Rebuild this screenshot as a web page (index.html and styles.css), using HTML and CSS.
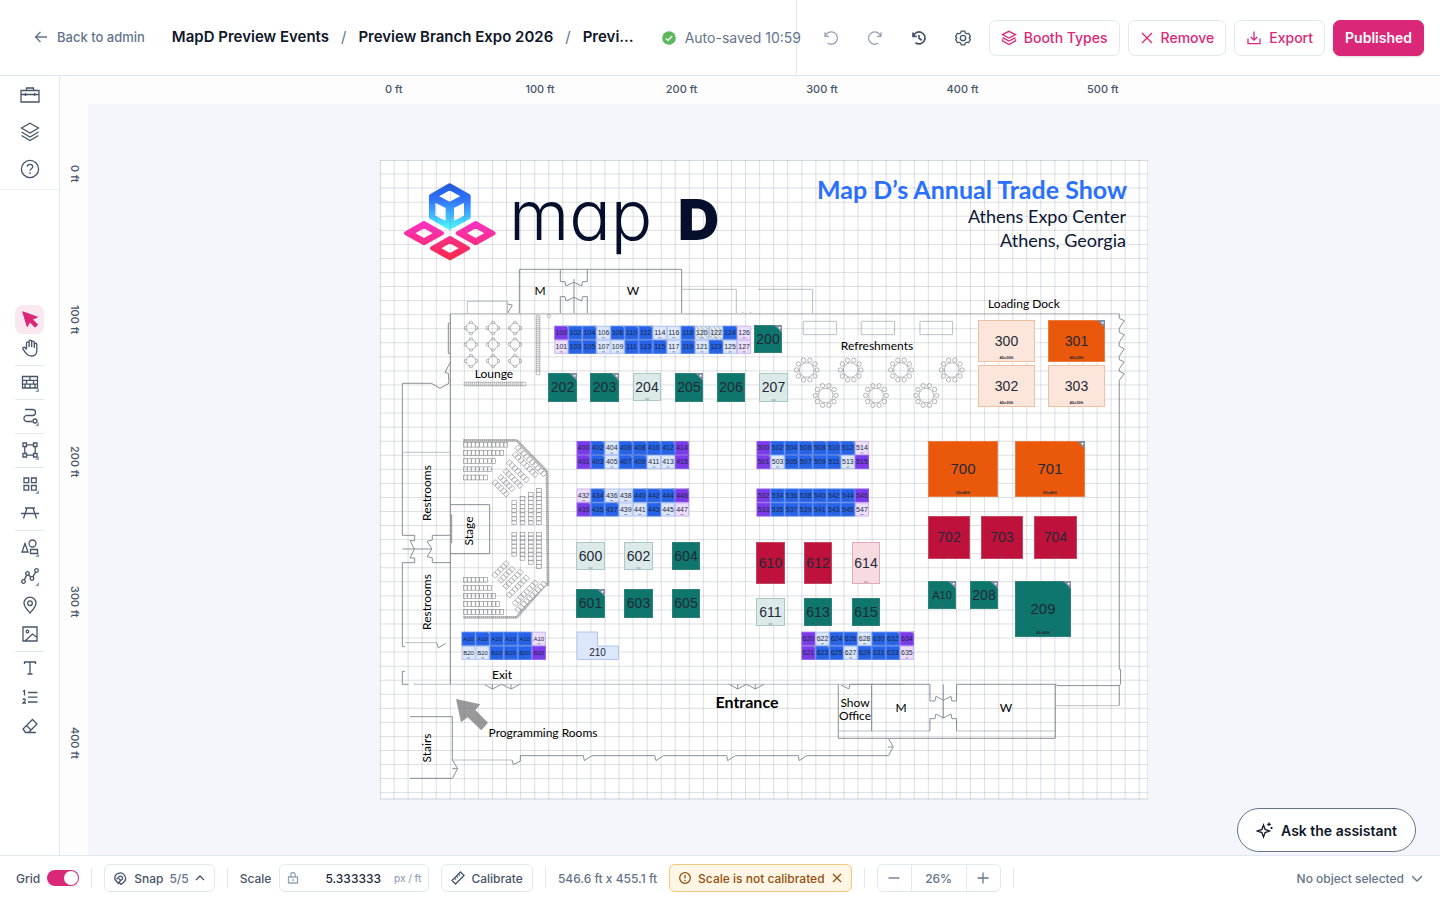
FILE: index.html
```html
<!DOCTYPE html>
<html lang="en">
<head>
<meta charset="utf-8">
<title>Preview Branch Expo 2026</title>
<link rel="stylesheet" href="styles.css">
</head>
<body>
<div class="app">
  <header class="topbar">
    <div class="topbar-left">
      <a class="back" href="#"><svg class="ic16" viewBox="0 0 16 16"><path d="M14 8H2.500M7.500 3L2.500 8l5 5"/></svg>Back to admin</a>
      <nav class="crumbs" aria-label="Breadcrumb">
        <a href="#">MapD Preview Events</a><span class="slash">/</span><a href="#">Preview Branch Expo 2026</a><span class="slash">/</span><a href="#">Previ...</a>
      </nav>
      <div class="saved"><svg class="ic14" viewBox="0 0 14 14"><circle class="ok" cx="7" cy="7" r="6.800"/><path class="tick" d="M3.800 7.400l2.200 1.900 4.200-4.300"/></svg>Auto-saved 10:59</div>
    </div>
    <div class="topbar-right">
      <button class="icon-btn dim" aria-label="Undo"><svg class="ic16" viewBox="0 0 16 16"><path d="M2 2.300v4h4M2.300 6.200A6.200 6.200 0 1 1 4.500 13"/></svg></button>
      <button class="icon-btn dim" aria-label="Redo"><svg class="ic16" viewBox="0 0 16 16"><path d="M14 2.300v4h-4M13.700 6.200A6.200 6.200 0 1 0 11.500 13"/></svg></button>
      <button class="icon-btn" aria-label="History"><svg class="ic16 bold" viewBox="0 0 16 16"><path d="M2 2.500v3.800h3.800M2.300 6.200A6 6 0 1 1 4.500 12.800M8 5v3.300l2.800 2"/></svg></button>
      <button class="icon-btn" aria-label="Settings"><svg class="ic16" viewBox="0 0 16 16"><path d="M5.500 3L6.300 1.200h3.400L10.500 3l1.200.7 2-.2 1.700 2.900L14.200 8l1.200 1.600-1.700 2.900-2-.2-1.200.7-.8 1.800H6.300L5.500 13l-1.200-.7-2 .2L.6 9.600 1.800 8 .6 6.400l1.700-2.900 2 .2z"/><circle cx="8" cy="8" r="2.700"/></svg></button>
      <button class="btn"><svg class="ic16" viewBox="0 0 16 16"><path d="M8 1.300l6.500 3.300L8 8 1.500 4.600zM1.500 7.600L8 11l6.500-3.400M1.500 9.300v1.500L8 14.500l6.500-3.700V9.300"/></svg>Booth Types</button>
      <button class="btn"><svg class="ic14" viewBox="0 0 14 14"><path d="M2 2l10 10M12 2L2 12"/></svg>Remove</button>
      <button class="btn"><svg class="ic16" viewBox="0 0 16 16"><path d="M8 1.500v8.500M4.800 7L8 10.200 11.200 7M2 8.500v5.200h12V8.500"/></svg>Export</button>
      <button class="btn primary">Published</button>
    </div>
  </header>

  <aside class="sidebar">
    <div class="side-top">
      <button class="side-btn" aria-label="Toolbox"><svg class="ic20" viewBox="0 0 20 20"><path d="M1 5.500h18v11.500H1zM6.500 5.500V3h7v2.500M1 9.500h18M5.500 8v3M14.500 8v3"/></svg></button>
      <button class="side-btn" aria-label="Layers"><svg class="ic20" viewBox="0 0 20 20"><path d="M10 1.200l8.500 4.800L10 11 1.500 6zM1.500 10l8.500 5 8.500-5M1.500 13.500l8.500 5 8.500-5"/></svg></button>
      <button class="side-btn" aria-label="Help"><svg class="ic20" viewBox="0 0 20 20"><circle cx="10" cy="10" r="8.600"/><path d="M7.300 7.800C7.300 4.600 12.700 4.600 12.700 7.800 12.700 9.800 10 9.700 10 11.800M10 13.300v1.600"/></svg></button>
    </div>
    <div class="tools">
      <button class="tool active" aria-label="Select"><svg class="ic18" viewBox="0 0 18 18"><path class="solid" d="M2 2l14 5.200-5.300 2.100 5.600 5.300-2.200 2.200-5.500-5.500-2.300 4.900z"/></svg></button>
      <button class="tool" aria-label="Pan"><svg class="ic18" viewBox="0 0 18 18"><path d="M5.500 10V4.200a1.300 1.300 0 0 1 2.600 0V8 2.500a1.300 1.300 0 0 1 2.600 0V8 3.500a1.300 1.300 0 0 1 2.600 0V9 5.500a1.200 1.200 0 0 1 2.500 0V11.500C15.800 15 13.500 17 10.500 17S6.200 16 4.800 14L2 10.200C1.200 8.500 3.200 7.500 4.200 8.800L5.500 10.500"/></svg></button>
      <hr>
      <button class="tool more" aria-label="Wall"><svg class="ic18" viewBox="0 0 18 18"><path d="M1.500 3.500h15v11.500h-15zM1.500 7.300h15M1.500 11.200h15M9 3.500v3.800M5.500 7.300v3.900M12.500 7.300v3.900M9 11.200V15M4 11.200V15M14 11.200V15"/></svg></button>
      <hr>
      <button class="tool more" aria-label="Path"><svg class="ic18" viewBox="0 0 18 18"><path d="M4 2.500h7.500a3 3 0 0 1 0 6H5a3.200 3.200 0 0 0 0 6h6.500"/><circle cx="14" cy="14" r="2"/></svg></button>
      <hr>
      <button class="tool more" aria-label="Edit nodes"><svg class="ic18" viewBox="0 0 18 18"><path d="M2 2h3.500v3.500H2zM12.500 2H16v3.500h-3.500zM2 12.500h3.500V16H2zM12.500 12.500H16V16h-3.500zM5.500 3.800h7M5.500 14.200h7M3.800 5.500v7M14.200 5.500v7"/></svg></button>
      <hr>
      <button class="tool more" aria-label="Booths"><svg class="ic18" viewBox="0 0 18 18"><path d="M3 3h4.700v4.700H3zM10.500 3h4.700v4.700h-4.700zM3 10.500h4.700v4.700H3zM10.500 10.500h4.700v4.700h-4.700z"/></svg></button>
      <button class="tool" aria-label="Table"><svg class="ic18" viewBox="0 0 18 18"><path d="M4 4h10M0 9.500h18M6 4L2.500 14.500M12 4l3.500 10.500"/></svg></button>
      <hr>
      <button class="tool more" aria-label="Shapes"><svg class="ic18" viewBox="0 0 18 18"><path d="M4 5.500l3 8.500H1zM9.500 11.500h7v4h-7z"/><circle cx="11.500" cy="5.500" r="3.500"/></svg></button>
      <button class="tool more" aria-label="Polyline"><svg class="ic18" viewBox="0 0 18 18"><circle cx="2.500" cy="14.500" r="1.800"/><circle cx="6.500" cy="6.500" r="1.800"/><circle cx="11" cy="11.500" r="1.800"/><circle cx="15.500" cy="3.500" r="1.800"/><path d="M3.300 12.900l2.400-4.800M7.700 7.800l2.100 2.400M11.700 9.900l3-4.700"/></svg></button>
      <button class="tool" aria-label="Pin"><svg class="ic18" viewBox="0 0 18 18"><path d="M9 17C5.500 13 3 10.500 3 7.200a6 6 0 0 1 12 0C15 10.500 12.500 13 9 17z"/><circle cx="9" cy="7.200" r="2.300"/></svg></button>
      <button class="tool" aria-label="Image"><svg class="ic18" viewBox="0 0 18 18"><path d="M2 2h14v14H2zM4.500 15.500l7-6.500 4.500 3.500"/><circle cx="6.500" cy="6.500" r="1.300"/></svg></button>
      <hr>
      <button class="tool" aria-label="Text"><svg class="ic18" viewBox="0 0 18 18"><path d="M3.500 5V3h11v2M9 3v12M6.500 15h5"/></svg></button>
      <button class="tool" aria-label="Numbering"><svg class="ic18" viewBox="0 0 18 18"><path d="M7 4.500h9.500M7 9.200h9.500M7 14h9.500M2 3.500L3.500 2.500v5M2 11.800C2.500 10 5 10.800 4 12.700L2 15h3"/></svg></button>
      <button class="tool" aria-label="Eraser"><svg class="ic18" viewBox="0 0 18 18"><path d="M11.500 2.500l4.500 4.500-8.500 8.500H4.500L2 12zM5.500 8.500l4.500 4.500M7.500 15.500H15"/></svg></button>
    </div>
  </aside>

  <div class="ruler-x"><div class="track-x"><span>0 ft</span><span>100 ft</span><span>200 ft</span><span>300 ft</span><span>400 ft</span><span>500 ft</span></div></div>
  <div class="ruler-y"><div class="track-y"><span>0 ft</span><span>100 ft</span><span>200 ft</span><span>300 ft</span><span>400 ft</span></div></div>

  <main class="canvas">
    <svg class="plan" viewBox="380 160 768 640" role="img" aria-label="Floor plan">
      <defs>
        <linearGradient id="cube" x1="0" y1="0" x2="0" y2="1"><stop offset="0" stop-color="#1d5be0"/><stop offset=".35" stop-color="#2f74ff"/><stop offset="1" stop-color="#4df3ff"/></linearGradient>
        <linearGradient id="pink" x1="0" y1="0" x2="0" y2="1"><stop offset="0" stop-color="#ff2fc4"/><stop offset="1" stop-color="#ff2c86"/></linearGradient>
        <linearGradient id="red" x1="0" y1="0" x2="0" y2="1"><stop offset="0" stop-color="#ff2c86"/><stop offset="1" stop-color="#ff2a4c"/></linearGradient>
        <pattern id="hatch" width="3" height="3" patternUnits="userSpaceOnUse" patternTransform="rotate(-45)"><rect class="hatch-bg" width="3" height="3"/><rect class="hatch-fg" width="1" height="3"/></pattern>
      </defs>
      <rect class="paper" x="380" y="160" width="768" height="639"/>
      <g transform="translate(380 155) scale(.3333)">
        <g fill-rule="evenodd" stroke-linejoin="round" stroke-width="12">
          <path fill="url(#cube)" stroke="url(#cube)" d="M209 91L266 123V187L209 218L153 187V123zM209 99L165 124L209 147L253 124zM160 134V186L203 207V155zM258 134V186L216 207V155z"/>
          <path fill="url(#pink)" stroke="url(#pink)" d="M132 204L186 235L132 265L78 235zM132 213L94 235L132 256L170 235z"/>
          <path fill="url(#pink)" stroke="url(#pink)" d="M287 204L341 235L287 265L233 235zM287 213L249 235L287 256L325 235z"/>
          <path fill="url(#red)" stroke="url(#red)" d="M210 249L264 280L210 310L156 280zM210 258L172 280L210 301L248 280z"/>
        </g>
        <g class="wall">
          <path d="M418 475V343H905V475M541 345V380H555L558 393L582 382L605 393L608 380H622V345M582 372V475M541 475V425H555L558 438L582 427L605 438L608 425H622V475"/>
          <path class="faint" d="M905 403H1069V475M1134 403H1298V475M262 475V439H382V475M211 476H2218M502 484a5 5 0 1 0 10 0a5 5 0 1 0-10 0M1088 475V470M1112 475V470"/>
          <path d="M383 447L397 450L383 474M211 505H205V595H211M211 622L195 652L205 655L207 685L180 700L154 685H67V735M211 476V1588"/>
          <path class="faint" d="M1270 499h100v40h-100zM1444 499h100v40h-100zM1620 499h98v40h-98z"/>
          <path d="M2218 476V490L2233 497L2218 520V532L2233 539L2218 562V574L2233 581L2218 604V614L2233 621L2218 641V649L2233 656L2218 676V1543H2222V1587L2218 1592V1652M2218 1592H2030"/>
        </g>
      </g>
      <g class="wall" transform="translate(380 400) scale(.3333)">
        <path d="M67 0V406H104V422H90L103 447L90 474H104V488H67V740H75M67 447H156M211 406H157V420L141 424L156 447L141 470L157 474V488H211M211 314H329V461H211M215 343V430M170 728L175 744L197 730"/>
        <path class="faint" d="M67 157H211M75 728H170"/>
        <path class="thick" d="M250 121H410M410 121L500 213M501 213L504 558M500 550L410 652M410 652H250"/>
      </g>
      <g class="wall" transform="translate(380 620) scale(.3333)">
        <path class="faint" d="M103 188V193H1575M217 420H396M1375 333H1650M1730 333H2026M2026 257H2218"/>
        <path d="M75 154H67V193H85M313 193L337 207L365 193L393 207L420 193M337 193V207M393 193V207M1048 193L1073 207L1100 193L1126 207L1152 193M1073 193V207M1126 193V207"/>
        <path d="M90 290H217V420L233 446L217 475H90M217 446H233M396 420L400 434L421 423V407H610L613 422L636 407H824L828 422L851 407H1040L1043 422L1066 407H1255L1258 422L1280 407H1526L1540 380L1526 357M1524 381H1538"/>
        <path d="M1375 193V355H2026V193M1383 195L1407 207L1410 193H1650V243H1665L1668 229L1690 241L1713 229L1716 243H1730V193H2030M1690 193V295M1650 333V296H1665L1668 282L1690 294L1713 282L1716 296H1730V333M1475 193V333"/>
        <path class="arrow" d="M228 237L301 253L286 270L324 308L304 331L263 292L243 307z"/>
      </g>
      <g id="furniture" class="furniture"></g>
      <g id="grid" class="grid"></g>
      <g id="booths"></g>
      <text class="logo-map" x="509" y="240">map</text>
      <text class="logo-d" x="678" y="240">D</text>
      <text class="plan-title" x="1127" y="199">Map D’s Annual Trade Show</text>
      <text class="plan-sub" x="1126" y="223">Athens Expo Center</text>
      <text class="plan-sub" x="1126" y="247">Athens, Georgia</text>
      <g class="place">
        <text x="540" y="295">M</text><text x="633" y="295">W</text><text x="494" y="378">Lounge</text>
        <text x="1024" y="308">Loading Dock</text><text x="877" y="350">Refreshments</text>
        <text x="502" y="679">Exit</text><text x="543" y="737">Programming Rooms</text>
        <text x="855" y="707">Show</text><text x="855" y="720">Office</text><text x="901" y="712">M</text><text x="1006" y="712">W</text>
        <text class="entrance" x="747" y="708">Entrance</text>
        <text transform="translate(431 493) rotate(-90)">Restrooms</text><text transform="translate(431 602) rotate(-90)">Restrooms</text>
        <text transform="translate(473 531) rotate(-90)">Stage</text><text transform="translate(431 748) rotate(-90)">Stairs</text>
      </g>
    </svg>
    <button class="assistant"><svg class="ic18" viewBox="0 0 18 18"><path d="M7.500 4l1.600 4.400L13.500 10l-4.400 1.600L7.500 16l-1.600-4.400L1.500 10l4.400-1.600zM13 1.500v3.600M11.200 3.300h3.600M15.500 6v2M14.500 7h2"/></svg>Ask the assistant</button>
  </main>

  <footer class="statusbar">
    <label class="grid-toggle">Grid<input type="checkbox" role="switch" checked></label>
    <i class="sep"></i>
    <button class="chip"><svg class="ic14" viewBox="0 0 14 14"><path d="M5 13L3.500 11.500 1 8.500a5.300 5.300 0 1 1 8.500 3L7 13.500 5 11l2.800-2.400A2 2 0 1 0 5 5.700L2.500 8.200M4.800 7.500l1.700 1.700M1 8.500l2.500 3"/></svg>Snap <span class="muted">5/5</span><svg class="ic10" viewBox="0 0 10 10"><path d="M1 7l4-4 4 4"/></svg></button>
    <i class="sep"></i>
    <label class="scale-label" for="scale">Scale</label>
    <div class="scale-box"><svg class="ic12 dim" viewBox="0 0 12 12"><path d="M1.500 5h9v6h-9zM3.800 5V2.800a2.200 2.200 0 0 1 4.400 0V5M5 8h2"/></svg><input id="scale" type="text" value="5.333333"><span>px / ft</span></div>
    <button class="chip"><svg class="ic14" viewBox="0 0 14 14"><path d="M9.500 1l3.500 3.500L4.500 13 1 9.500zM7.500 3l1.500 1.500M5.500 5l1.500 1.500M3.500 7L5 8.500"/></svg>Calibrate</button>
    <i class="sep"></i>
    <span class="dims">546.6 ft x 455.1 ft</span>
    <div class="warn"><svg class="ic12" viewBox="0 0 12 12"><circle cx="6" cy="6" r="5.300"/><path d="M6 3v3.600M6 8v1.200"/></svg>Scale is not calibrated<button aria-label="Dismiss"><svg class="ic10" viewBox="0 0 10 10"><path d="M1 1l8 8M9 1L1 9"/></svg></button></div>
    <i class="sep"></i>
    <div class="zoom"><button aria-label="Zoom out"><svg class="ic12" viewBox="0 0 12 12"><path d="M.5 6h11"/></svg></button><output>26%</output><button aria-label="Zoom in"><svg class="ic12" viewBox="0 0 12 12"><path d="M.5 6h11M6 .5v11"/></svg></button></div>
    <i class="sep"></i>
    <button class="selection">No object selected<svg class="ic10" viewBox="0 0 10 10"><path d="M0 3l5 5 5-5"/></svg></button>
  </footer>
</div>
<script src="plan.js"></script>
</body>
</html>
```

FILE: styles.css
```css
* { box-sizing: border-box; }
body { margin: 0; font-family: Inter, "Liberation Sans", sans-serif; color: #475569; font-size: 12px; }
button { font: inherit; color: inherit; background: none; border: 0; padding: 0; display: flex; align-items: center; justify-content: center; cursor: pointer; white-space: nowrap; }
a { color: inherit; text-decoration: none; }
svg { display: block; flex: none; fill: none; stroke: currentColor; stroke-width: 1.3; }
.ic10 { width: 10px; height: 10px; }
.ic12 { width: 12px; height: 12px; }
.ic14 { width: 14px; height: 14px; }
.ic16 { width: 16px; height: 16px; }
.ic18 { width: 18px; height: 18px; }
.ic20 { width: 20px; height: 20px; }
.bold { stroke-width: 1.7; }
.dim { color: #94a3b8; }

.app { display: grid; grid-template: auto 28px minmax(0, 1fr) auto / 60px 28px minmax(0, 1fr); height: 100vh; background: #fff; }
.topbar { grid-column: 1 / -1; display: flex; height: 76px; border-bottom: 1px solid #e2e8f0; white-space: nowrap; }
.topbar-left { flex: 1; min-width: 0; display: flex; align-items: center; padding-left: 33px; border-right: 1px solid #e2e8f0; }
.back { display: flex; align-items: center; gap: 8px; font-size: 13px; font-weight: 500; color: #64748b; margin-right: 27px; padding-bottom: 1px; }
.crumbs { display: flex; gap: 11px; font-size: 15px; font-weight: 600; color: #0f172a; margin-right: 28px; padding-bottom: 2px; }
.slash { font-weight: 400; color: #64748b; padding: 0 1px; }
.saved { display: flex; align-items: center; gap: 9px; font-size: 14px; color: #64748b; }
.ok { fill: #5cb85c; stroke: none; }
.tick { stroke: #fff; }
.topbar-right { display: flex; align-items: center; gap: 8px; padding: 0 16px; }
.icon-btn { width: 36px; height: 36px; }
.icon-btn.dim { color: #94a3b8; }
.btn { height: 36px; padding: 0 11px; gap: 7px; border: 1px solid #e2e8f0; border-radius: 7px; color: #db2777; font-size: 14px; font-weight: 500; }
.btn.primary { background: #db2777; border-color: #db2777; color: #fff; font-weight: 600; box-shadow: 0 1px 2px #0002; }

.sidebar { grid-row: 2 / 4; display: flex; flex-direction: column; border-right: 1px solid #e2e8f0; }
.side-top { display: flex; flex-direction: column; align-items: center; border-bottom: 1px solid #eef1f5; padding-bottom: 2px; }
.side-btn { width: 37px; height: 37px; }
.tools { flex: 1; display: flex; flex-direction: column; align-items: center; justify-content: center; }
.tool { width: 29px; height: 29px; border-radius: 8px; position: relative; }
.tool.active { background: #fbe7f0; color: #db2777; }
.solid { fill: currentColor; stroke-linejoin: round; }
.more::after { content: ""; position: absolute; right: 5px; bottom: 5px; border: 2px solid; border-color: transparent #94a3b8 #94a3b8 transparent; }
.tools hr { width: 29px; margin: 2px 0; border: 0; border-top: 1px solid #e2e8f0; }

.ruler-x { grid-column: 2 / 4; padding: 0 0 2px 28px; background: #fdfdfd; display: flex; justify-content: center; align-items: center; }
.ruler-y { display: flex; flex-direction: column; justify-content: center; align-items: center; padding-left: 2px; background: #fdfdfd; }
.track-x { display: grid; grid-template-columns: repeat(5, 100fr) 47fr; width: 768px; font-size: 11px; font-weight: 500; }
.track-x span { padding-left: 5px; white-space: nowrap; }
.track-y { display: grid; grid-template-rows: repeat(4, 100fr) 55fr; height: 640px; font-size: 11px; font-weight: 500; }
.track-y span { writing-mode: vertical-rl; padding-top: 5px; }

.canvas { position: relative; display: flex; align-items: center; justify-content: center; background: #f4f6fb; overflow: hidden; }
.plan { width: 768px; height: 640px; stroke: none; }
.paper { fill: #fff; stroke: #d5dbe5; }
.grid { stroke: #6b7684; stroke-opacity: .23; stroke-width: 1; }
.wall { stroke: #8b8f94; stroke-width: 3; }
.wall .faint { stroke: #bcc0c4; }
.wall .thick { stroke: #aaa; stroke-width: 8; stroke-dasharray: 5 1; }
.wall .arrow { fill: #999; stroke: none; }
.furniture { stroke: #888; stroke-width: .6; fill: #fff; }
.plan text { font-family: Lato, "Open Sans", sans-serif; }
.plan .logo-map { font: 300 69px Inter, sans-serif; font-feature-settings: "cv11"; fill: #050f2c; }
.plan .logo-d { font: 900 57px Inter, sans-serif; fill: #050f2c; }
.plan-title { font-size: 25px; font-weight: 700; fill: #2970ff; text-anchor: end; }
.plan-sub { font-size: 18px; fill: #0b1633; text-anchor: end; }
.place { font-size: 12px; fill: #000; text-anchor: middle; }
.entrance { font-size: 16px; font-weight: 700; }
.plan .num { font-family: "Liberation Sans", Arial, sans-serif; fill: #1f2937; text-anchor: middle; }
.plan .area { font-size: 4px; font-weight: 700; }
.booth { stroke-width: 1; }
.green { fill: #0f766e; stroke: #2d8279; }
.mint { fill: #dbe9e8; stroke: #a9c9c6; }
.blue { fill: #2563eb; stroke: #4a7bea; }
.sky { fill: #dce7fc; stroke: #b0c5f2; }
.purple { fill: #7c3aed; stroke: #8d58ec; }
.lilac { fill: #ecdffc; stroke: #d0b4f3; }
.orange { fill: #ea580c; stroke: #ea7c40; }
.peach { fill: #fce6db; stroke: #efbfa2; }
.crimson { fill: #be123c; stroke: #c54562; }
.rose { fill: #f6dbe1; stroke: #e2a9b6; }
.hatched { fill: url(#hatch); stroke: #b0c5f2; }
.hatch-bg { fill: #e6ecf2; }
.hatch-fg { fill: #b4bfc8; }
.flag { fill: #7f8ea3; }
.flag-dot { fill: #fff; }
.size { stroke: #59636f; stroke-opacity: .6; stroke-width: 1; }

.assistant { position: absolute; right: 24px; bottom: 3px; height: 44px; padding: 0 18px; gap: 7px; border: 1px solid #64748b; border-radius: 22px; background: #fff; color: #0f172a; font-size: 14px; font-weight: 600; }

.statusbar { grid-column: 1 / -1; display: flex; align-items: center; gap: 12px; height: 45px; padding: 0 18px 0 16px; border-top: 1px solid #e2e8f0; font-weight: 500; white-space: nowrap; }
.sep { width: 1px; height: 20px; background: #e2e8f0; }
.grid-toggle { display: flex; align-items: center; gap: 7px; }
.grid-toggle input { appearance: none; width: 32px; height: 16px; margin: 0; border-radius: 8px; background: #db2777; display: flex; justify-content: flex-end; padding: 1px; }
.grid-toggle input::before { content: ""; width: 14px; height: 14px; border-radius: 50%; background: #fff; }
.chip { height: 28px; padding: 0 9px; gap: 6px; border: 1px solid #e2e8f0; border-radius: 6px; }
.muted { color: #64748b; }
.scale-label { margin-right: -4px; }
.scale-box { display: flex; align-items: center; width: 150px; height: 28px; padding: 0 7px; gap: 8px; border: 1px solid #e2e8f0; border-radius: 6px; }
.scale-box input { flex: 1; min-width: 0; border: 0; padding: 0 5px 0 0; text-align: right; font: inherit; color: #1e293b; background: none; }
.scale-box span { font-size: 10px; color: #94a3b8; }
.dims { color: #64748b; }
.warn { display: flex; align-items: center; gap: 7px; height: 28px; padding: 0 9px; border: 1px solid #f5c778; border-radius: 6px; background: #fff6e5; color: #92500e; }
.zoom { display: flex; align-items: stretch; height: 28px; border: 1px solid #e2e8f0; border-radius: 6px; color: #64748b; }
.zoom button { width: 33px; }
.zoom output { width: 56px; display: flex; align-items: center; justify-content: center; border: solid #e2e8f0; border-width: 0 1px; }
.selection { margin-left: auto; gap: 8px; color: #64748b; }
```

FILE: plan.js
```js
const NS = 'http://www.w3.org/2000/svg';
const CELL = 14.06;
const booths = document.getElementById('booths');
const furniture = document.getElementById('furniture');
const grid = document.getElementById('grid');

function add(parent, tag, attrs, text) {
  const el = document.createElementNS(NS, tag);
  for (const k in attrs) el.setAttribute(k, attrs[k]);
  if (text) el.textContent = text;
  parent.appendChild(el);
  return el;
}

/* Grid: one line every 10 ft */
for (let x = 380; x < 1149; x += CELL) add(grid, 'path', { d: `M${x} 160V799` });
for (let y = 160; y < 800; y += CELL) add(grid, 'path', { d: `M380 ${y}H1148` });

function booth(label, color, x, y, w, h, size, flag) {
  add(booths, 'rect', { class: 'booth ' + color, x: x + .5, y: y + .5, width: w - 1, height: h - 1 });
  add(booths, 'text', { class: 'num', x: x + w / 2, y: y + h / 2 + size * .35, 'font-size': size }, label);
  if (w > 50) {
    const area = `${Math.round(w / CELL) * 10}x${Math.round(h / CELL) * 10}ft`;
    add(booths, 'text', { class: 'num area', x: x + w / 2, y: y + h - 3 }, area);
  } else {
    const s = w > 20 ? 2 : 1.5;
    add(booths, 'path', { class: 'size', d: `M${x + w / 2 - s} ${y + h - 2}h${s * 2}` });
  }
  if (flag) {
    const f = w > 20 ? 8 : 3;
    add(booths, 'path', { class: 'flag', d: `M${x + w - f} ${y}h${f}v${f}z` });
    add(booths, 'circle', { class: 'flag-dot', cx: x + w - f * .3, cy: y + f * .35, r: f * .13 });
  }
}

const COLORS = { b: 'blue', s: 'sky', p: 'purple', l: 'lilac', h: 'hatched' };
/* A code is a colour letter; upper case marks a corner flag */
function strip(x, y, labels, codes) {
  labels.split(' ').forEach((label, i) => {
    const c = codes[i];
    booth(label, COLORS[c.toLowerCase()], x + i * CELL, y, CELL, CELL, label[0] > '9' ? 6 : 7, c !== c.toLowerCase());
  });
}
strip(554.3, 325.7, '100 102 104 106 108 110 112 114 116 118 120 122 124 126', 'PbBsBBBssBhhBl');
strip(554.3, 339.8, '101 103 105 107 109 111 113 115 117 119 121 123 125 127', 'lBBssbbBsBsBsl');
strip(576.6, 441, '400 402 404 406 408 410 412 414', 'pBsBBBBP');
strip(576.6, 455, '401 403 405 407 409 411 413 415', 'PBsBBssp');
strip(576.6, 488.5, '432 434 436 438 440 442 444 446', 'lBssBBBP');
strip(576.6, 502.5, '433 435 437 439 441 443 445 447', 'PbBssbsl');
strip(756.5, 441, '500 502 504 506 508 510 512 514', 'pbbBBBBl');
strip(756.5, 455, '501 503 505 507 509 511 513 515', 'PsbBbBsp');
strip(756.5, 488.5, '532 534 536 538 540 542 544 546', 'pbbbbbbp');
strip(756.5, 502.5, '533 535 537 539 541 543 545 547', 'pbbbbbbl');
strip(801.4, 631.7, '620 622 624 626 628 630 632 634', 'psbbsbBP');
strip(801.4, 645.8, '621 623 625 627 629 631 633 635', 'PBbsbbbl');
strip(461.5, 631.7, 'A10 A10 A10 A10 A10 A10', 'bBbbbl');
strip(461.5, 645.8, 'B20 B20 B20 B20 B20 B20', 'ssbbbp');

[
  ['200', 'green', 754, 325, 28, 28, 1], ['202', 'green', 548, 373, 29, 29, 1], ['203', 'green', 590, 373, 29, 29, 1],
  ['204', 'mint', 633, 373, 28, 28], ['205', 'green', 675, 373, 28, 29, 1], ['206', 'green', 717, 373, 28, 29],
  ['207', 'mint', 759, 373, 29, 29], ['600', 'mint', 576, 542, 29, 28], ['602', 'mint', 624, 542, 29, 28],
  ['604', 'green', 672, 542, 28, 28], ['601', 'green', 576, 589, 29, 29, 1], ['603', 'green', 624, 589, 29, 29],
  ['605', 'green', 672, 589, 28, 29], ['610', 'crimson', 756, 542, 29, 42], ['612', 'crimson', 804, 542, 28, 42],
  ['614', 'rose', 852, 542, 28, 42], ['611', 'mint', 756, 598, 29, 28], ['613', 'green', 804, 598, 28, 28],
  ['615', 'green', 852, 598, 28, 28], ['A10', 'green', 928, 581, 28, 28, 1], ['208', 'green', 970, 581, 28, 28, 1],
  ['209', 'green', 1015, 581, 56, 56, 1], ['702', 'crimson', 928, 516, 42, 43], ['703', 'crimson', 981, 516, 42, 43],
  ['704', 'crimson', 1034, 516, 43, 43], ['700', 'orange', 928, 441, 70, 56], ['701', 'orange', 1015, 441, 70, 56, 1],
  ['300', 'peach', 978, 320, 57, 42], ['301', 'orange', 1048, 320, 57, 42, 1], ['302', 'peach', 978, 365, 57, 42],
  ['303', 'peach', 1048, 365, 57, 42]
].forEach(([label, color, x, y, w, h, flag]) => {
  const size = label === 'A10' ? 11 : w > 50 && label[0] !== '3' ? 15 : 14;
  booth(label, color, x, y, w, h, size, flag);
});
add(booths, 'path', { class: 'booth sky', d: 'M577 632H597.500V646H618.500V659.500H577z' });
add(booths, 'text', { class: 'num', x: 597.5, y: 656, 'font-size': 10 }, '210');

/* Round tables with ten chairs */
[[806.7, 370], [850.7, 370], [901, 370], [951.7, 370], [825.7, 395.5], [876, 395.5], [926.3, 395.5]].forEach(([cx, cy]) => {
  for (let i = 0; i < 10; i++) {
    const a = i * Math.PI / 5;
    add(furniture, 'circle', { cx: cx + 10.3 * Math.cos(a), cy: cy + 10.3 * Math.sin(a), r: 2.2 });
  }
  add(furniture, 'circle', { cx, cy, r: 7.3 });
});
/* Lounge tables */
for (const cx of [471, 493, 515]) for (const cy of [328, 344.5, 361]) {
  for (const [dx, dy] of [[5, 0], [-5, 0], [0, 5], [0, -5]]) add(furniture, 'circle', { cx: cx + dx, cy: cy + dy, r: 1.8 });
  add(furniture, 'circle', { cx, cy, r: 4.8 });
}
for (let y = 317; y < 375; y += 2) add(furniture, 'circle', { cx: 538, cy: y, r: 2 });
for (let x = 466; x < 525; x += 2) add(furniture, 'circle', { cx: x, cy: 384, r: 2 });

/* Theatre seating: a run of seats from a point, along an angle */
function seats(x, y, n, angle) {
  const g = add(furniture, 'g', { transform: `translate(${x} ${y}) rotate(${angle})` });
  for (let i = 0; i < n; i++) add(g, 'rect', { x: i * 4.05, y: -2.4, width: 3.6, height: 4.8 });
}
[11, 10, 8, 7, 6].forEach((n, i) => seats(463.5, 444.7 + i * 8.2, n, 0));
[6, 7, 8, 9, 10].forEach((n, i) => seats(463.5, 579.7 + i * 8.1, n, 0));
[6, 7, 8, 9].forEach((n, i) => { seats(514.3 + i * 8.2, 525 - n * 4.05, n, 90); seats(514.3 + i * 8.2, 532.3, n, 90); });
[[410, 140, 10], [402, 160, 8], [384, 184, 7], [374, 210, 6], [358, 228, 5], [341, 244, 5]].forEach(([x, y, n]) => {
  seats(380 + x / 3, 400 + y / 3, n, 45);
  seats(380 + x / 3, 400 + (773 - y) / 3, n, -45);
});
```
